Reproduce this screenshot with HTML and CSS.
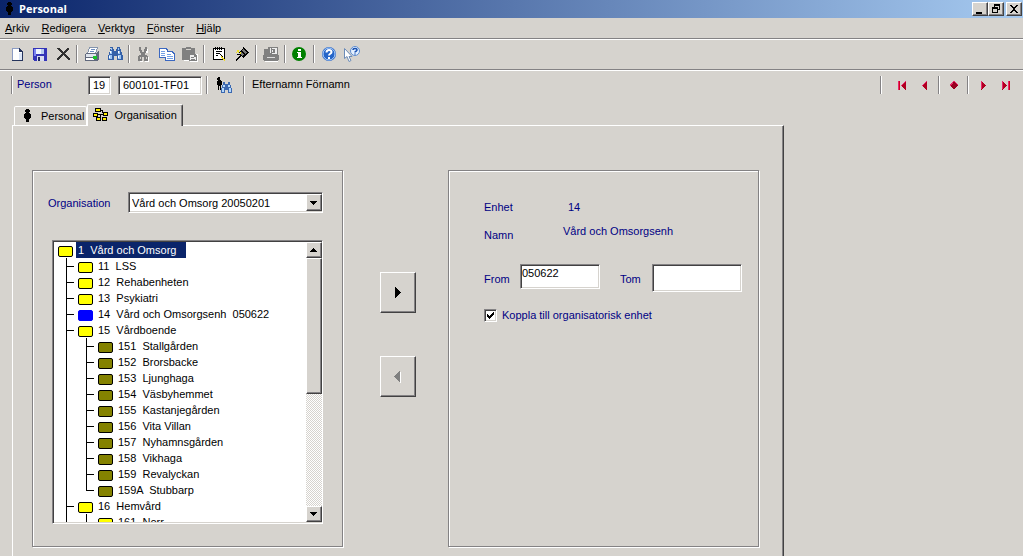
FILE: index.html
```html
<!DOCTYPE html>
<html lang="sv">
<head>
<meta charset="utf-8">
<title>Personal</title>
<link rel="stylesheet" href="styles.css">
</head>
<body>
<svg class="defs" aria-hidden="true">
  <symbol id="man" viewBox="0 0 16 16"><path d="M7 1h3v1h1v2h-1v1h1v1h1v4h-1v1h-1v3h-3v-3h-1v-1h-1v-4h1v-1h1v-1h-1v-2h1z"/></symbol>
  <symbol id="sm-binoc" viewBox="0 0 16 16"><path fill="#3460a8" d="M3 1h3v2h1v2h2v-2h1v-2h3v2h1v3h1v3h1v5h-6v-4h-3v4h-6v-5h1v-3h1v-3h1z"/><path fill="#9cc5f4" d="M4 2h1v2h-1zM3 5h2v3h-2zM11 2h1v2h-1zM11 5h2v3h-2zM2 9h3v4h-3zM11 9h3v4h-3z"/><path fill="#fff" d="M3 5h1v2h-1zM11 5h1v2h-1zM2 10h1v2h-1zM11 10h1v2h-1z"/></symbol>
  <symbol id="tri-l" viewBox="0 0 16 16"><path fill="#b00020" d="M9 4h1v9h-1v-1h-1v-1h-1v-1h-1v-1h-1v-1h1v-1h1v-1h1v-1h1z"/><path fill="#e8286c" d="M5 8h1v-1h1v-1h1v-1h1v-1h1v1h-1v1h-1v1h-1v1h-1v1h-1z"/></symbol>
  <symbol id="tri-r" viewBox="0 0 16 16"><path fill="#b00020" d="M6 4h1v1h1v1h1v1h1v1h1v1h-1v1h-1v1h-1v1h-1v1h-1z"/><path fill="#e8286c" d="M6 4h1v8h-1z"/></symbol>
</svg>

<header class="titlebar">
  <svg class="icon"><use href="#man"/></svg>
  <h1>Personal</h1>
  <div class="winbtns">
    <button aria-label="Minimera"><svg width="12" height="10"><path d="M2 8h6v2h-6z"/></svg></button>
    <button aria-label="Återställ"><svg width="12" height="10"><path fill-rule="evenodd" d="M4 0h6v6h-2v-1h1v-3h-4v1h-1zM2 3h6v6h-6zM3 5v3h4v-3z"/></svg></button>
    <button class="close" aria-label="Stäng"><svg width="12" height="10"><path d="M2 1h2v1h1v1h2v-1h1v-1h2v1h-1v1h-1v1h-1v2h1v1h1v1h1v1h-2v-1h-1v-1h-2v1h-1v1h-2v-1h1v-1h1v-1h1v-2h-1v-1h-1v-1h-1z"/></svg></button>
  </div>
</header>

<nav class="menubar">
  <button><u>A</u>rkiv</button><button><u>R</u>edigera</button><button><u>V</u>erktyg</button><button><u>F</u>önster</button><button><u>H</u>jälp</button>
</nav>

<div class="toolbar">
  <button aria-label="Ny"><svg class="icon"><path fill="#fff" d="M3 2h7l4 4v9h-11z"/><path fill="#8c9cc4" d="M3 2h7v1h-6v11h-1z"/><path fill="#26345c" d="M10 2h1v1h1v1h1v1h1v10h-11v-1h10v-8h-3z"/><path fill="#dce6f8" d="M10 7h3v7h-3z"/></svg></button>
  <button aria-label="Spara"><svg class="icon"><path fill="#3434b8" d="M1 2h14v13h-13l-1-1z"/><path fill="#7c84f0" d="M2 3h2v7h-2z"/><path fill="#eef4ff" d="M4 3h8v5h-8z"/><path fill="#b8ccf0" d="M9 3h3v5h-3z"/><path fill="#d8dcf0" d="M5 10h7v5h-7z"/><path fill="#202868" d="M6 11h2v4h-2z"/></svg></button>
  <button aria-label="Ta bort"><svg class="icon"><path fill="#303030" d="M2 2h2l4 4 5-4h1v1l-4 4 5 6v1h-2l-5-5-4 5h-2v-1l5-6-5-4z"/></svg></button>
  <span class="sep"></span>
  <button aria-label="Skriv ut"><svg class="icon"><path fill="#8494ac" d="M5 1h9v1l-2 6h-9z"/><path fill="#fff" d="M6 2h7l-2 5h-7z"/><path fill="#6c8cc0" d="M7 3h4v1h-4zM6 5h4v1h-4z"/><path fill="#60687c" d="M1 8l2-1h9l2-2h1v8l-2 2h-12z"/><path fill="#dfe5ed" d="M2 8h10v3h-10z"/><path fill="#fff" d="M2 12h8v2h-8z"/><path fill="#18c428" d="M9 10h4v3h-4z"/></svg></button>
  <button aria-label="Sök"><svg class="icon"><use href="#sm-binoc"/></svg></button>
  <span class="sep"></span>
  <button aria-label="Klipp ut"><svg class="icon"><path fill="#fff" d="M11 3h1v4h-2v3h2v1h1v5h-4v-1h3v-4h-3zM4 15h3v1h-3z"/><path fill="#808080" d="M3 1h2v3h1v2h2v-3h1v-2h2v4h-1v2h-1v2h2v1h1v5h-4v-4h-2v4h-4v-5h1v-1h2v-2h-1v-2h-1zM4 11v2h1v-2zM10 11v2h1v-2z" fill-rule="evenodd"/></svg></button>
  <button aria-label="Kopiera"><svg class="icon"><path fill="#3c68c0" d="M0 2h7l2 2v8h-9zM6 5h7l3 3v7h-10z"/><path fill="#fff" d="M1 3h5l2 2v6h-7zM7 6h5l3 3v5h-8z"/><path fill="#74a0e4" d="M2 5h4v1h-4zM2 7h4v1h-4zM2 9h4v1h-4zM8 8h4v1h-4zM8 10h6v1h-6zM8 12h6v1h-6z"/></svg></button>
  <button aria-label="Klistra in"><svg class="icon"><path fill="#fff" d="M2 14h6v1h-6zM14 8h2v8h-8v-1h7v-6h-1z"/><path fill="#808080" d="M0 2h4v-1h5v1h4v6h-6v6h-7z"/><path fill="#d6d3ce" d="M4 3h5v1h-5z"/><path fill="#808080" d="M7 8h6l2 2v5h-8z"/><path fill="#eee" d="M8 9h4v2h2v3h-6z"/><path fill="#808080" d="M9 11h3v1h-3zM9 13h4v1h-4z"/></svg></button>
  <span class="sep"></span>
  <button aria-label="Anteckning"><svg class="icon"><path d="M2 2h12v12h-12z"/><path fill="#fff" d="M3 3h10v10h-10z"/><path d="M4 1h1v3h-1zM6 1h1v3h-1zM8 1h1v3h-1zM10 1h1v3h-1zM5 5h6v1h-6zM5 7h3v1h-3zM5 9h2v1h-2zM8 7h1v1h1v1h1v1h1v1h-1v-1h-1v-1h-1v-1h-1z"/><path fill="#f0dc20" d="M10 10h1v1h1v1h1v1h1v2h-1v-1h-1v-1h-1v-1h-1z"/></svg></button>
  <button aria-label="Verktyg"><svg class="icon"><path d="M9 1h1v1h1v1h1v1h1v1h1v1h1v1h-1v1h-1v1h-1v1h-1v1h-1v1h-1v-1h-1v-1h-1v1h-1v1h-1v1h-1v1h-1v1h-1v-2h1v-1h1v-1h1v-1h1v-1h-3v-1h3v-1h-1v-1h1v-1h1v-1h1v-1h1z"/><path fill="#777" d="M9 3h1v1h1v1h1v1h1v1h-1v1h-1v-1h-1v-1h-1v-1h-1v-1h1zM7 6h1v1h1v1h1v1h-1v1h-1v-1h-1z"/><path fill="#f0e020" d="M3 4h2v3h-1v-1h-1zM2 6h1v1h-1zM6 6h1v2h-1z"/></svg></button>
  <span class="sep"></span>
  <button aria-label="Arkivera"><svg class="icon"><path fill="#fff" d="M2 15h13v1h-13z"/><path fill="#808080" d="M1 3h4v-2h10v8h1v5h-1v1h-14v-1h-1v-5h1z"/><path fill="#eee" d="M7 2h1v5h-1zM9 2h5v1h-5zM12 3h2v5h-2zM9 7h3v1h-3zM9 4h1v2h-1z"/><path fill="#ddd" d="M4 11h8v1h-8z"/></svg></button>
  <span class="sep"></span>
  <button aria-label="Information"><svg class="icon"><circle class="smooth" cx="7" cy="8" r="7" fill="#008000"/><path fill="#fff" d="M6 3h3v2h-3zM5 6h4v5h1v1h-5v-1h1v-4h-1z"/></svg></button>
  <span class="sep"></span>
  <button aria-label="Hjälp"><svg class="icon smooth"><circle cx="8" cy="8" r="7" fill="#2464c8"/><circle cx="8" cy="8" r="6" fill="none" stroke="#b4d4fc"/><path fill="none" stroke="#fff" stroke-width="2" d="M5.500 6.500C5.500 3 10.500 3.500 10.500 6c0 2-2.500 1.500-2.500 3.500M8 11v2"/></svg></button>
  <button aria-label="Förklaring"><svg class="icon smooth"><path fill="#fff" stroke="#6c8cb8" d="M.5 2.500v10l2.500-2 2 5 2-1-2-4h3z"/><circle cx="11" cy="5" r="4.500" fill="#e4f0ff" stroke="#5c8cd0"/><path fill="none" stroke="#1850b0" stroke-width="1.500" d="M9 4c0-2 4-2 4 0 0 1.500-2 1-2 2.500M11 7.500v1"/></svg></button>
</div>

<div class="personbar">
  <span class="sep"></span>
  <label class="blue" for="pid">Person</label>
  <input id="pid" class="sunk century" value="19">
  <input class="sunk number" aria-label="Personnummer" value="600101-TF01">
  <span class="sep"></span>
  <button class="find" aria-label="Sök person"><svg class="icon"><path d="M2 0h2v3h1v1h1v4h-1v5h-1v-4h-1v4h-1v-5h-1v-4h1v-1h-1v-2h1z"/><svg x="5" y="5" width="11" height="11" viewBox="0 0 11 11"><path fill="#3c68b0" d="M2 0h2v2h3v-2h2v3h1v3h1v5h-4v-3h-3v3h-4v-5h1v-3h1z"/><path fill="#b4d8fc" d="M2 3h2v2h-2zM7 3h2v2h-2zM1 6h2v4h-2zM8 6h2v4h-2z"/></svg></svg></button>
  <span class="sep"></span>
  <span class="name">Efternamn Förnamn</span>
  <div class="records">
    <span class="sep"></span>
    <button class="first" aria-label="Första"><svg class="icon"><path fill="#d00020" d="M4 4h2v9h-2z"/><path fill="#e8286c" d="M4 4h1v9h-1z"/><svg x="2" width="16" height="16"><use href="#tri-l"/></svg></svg></button>
    <button aria-label="Föregående"><svg class="icon"><use href="#tri-l"/></svg></button>
    <span class="sep"></span>
    <button aria-label="Aktuell"><svg class="icon"><path fill="#e8286c" d="M7 4h2v1h1v1h1v1h1v2h-1v1h-1v1h-1v1h-2v-1h-1v-1h-1v-1h-1v-2h1v-1h1v-1h1z"/><path fill="#980020" d="M7 5h2v1h1v1h1v1h1v1h-1v1h-1v1h-1v1h-2v-1h-1v-1h-1v-2h1v-1h1z"/></svg></button>
    <span class="sep"></span>
    <button aria-label="Nästa"><svg class="icon"><use href="#tri-r"/></svg></button>
    <button aria-label="Sista"><svg class="icon"><path fill="#d00020" d="M10 4h2v9h-2z"/><path fill="#e8286c" d="M10 4h1v9h-1z"/><svg x="-2" width="16" height="16"><use href="#tri-r"/></svg></svg></button>
  </div>
</div>

<div class="tabs" role="tablist">
  <button class="tab" role="tab"><svg class="icon"><use href="#man"/></svg>Personal</button>
  <button class="tab active" role="tab" aria-selected="true"><svg class="icon"><path d="M2 1h6v4h-6zM0 6h5v4h-5zM10 5h5v4h-5zM3 10h5v4h-5zM9 10h5v4h-5zM8 3h2v2h1v1h-2v-2h-1zM5 7h5v1h-5zM7 8h1v2h-1z"/><path fill="#ffee00" d="M3 2h4v2h-4zM1 7h3v2h-3zM11 6h3v2h-3zM4 11h3v2h-3zM10 11h3v2h-3z"/></svg>Organisation</button>
</div>

<main class="page">
  <section class="panel">
    <div class="picker">
      <label class="blue" for="org">Organisation</label>
      <div class="combo">
        <select id="org" class="sunk"><option>Vård och Omsorg 20050201</option></select>
        <span class="raised arrow"><svg width="8" height="4"><path d="M0 0h7v1h-1v1h-1v1h-1v1h-1v-1h-1v-1h-1v-1h-1z"/></svg></span>
      </div>
    </div>
    <div class="treebox sunk">
      <div class="tree">
        <div class="row root"><i class="box"></i><span class="txt sel">1  Vård och Omsorg</span></div>
        <ul>
          <li><div class="row"><i class="box"></i><span class="txt">11  LSS</span></div></li>
          <li><div class="row"><i class="box"></i><span class="txt">12  Rehabenheten</span></div></li>
          <li><div class="row"><i class="box"></i><span class="txt">13  Psykiatri</span></div></li>
          <li><div class="row"><i class="box current"></i><span class="txt">14  Vård och Omsorgsenh  050622</span></div></li>
          <li><div class="row"><i class="box"></i><span class="txt">15  Vårdboende</span></div>
            <ul>
              <li><div class="row"><i class="box leaf"></i><span class="txt">151  Stallgården</span></div></li>
              <li><div class="row"><i class="box leaf"></i><span class="txt">152  Brorsbacke</span></div></li>
              <li><div class="row"><i class="box leaf"></i><span class="txt">153  Ljunghaga</span></div></li>
              <li><div class="row"><i class="box leaf"></i><span class="txt">154  Väsbyhemmet</span></div></li>
              <li><div class="row"><i class="box leaf"></i><span class="txt">155  Kastanjegården</span></div></li>
              <li><div class="row"><i class="box leaf"></i><span class="txt">156  Vita Villan</span></div></li>
              <li><div class="row"><i class="box leaf"></i><span class="txt">157  Nyhamnsgården</span></div></li>
              <li><div class="row"><i class="box leaf"></i><span class="txt">158  Vikhaga</span></div></li>
              <li><div class="row"><i class="box leaf"></i><span class="txt">159  Revalyckan</span></div></li>
              <li class="last"><div class="row"><i class="box leaf"></i><span class="txt">159A  Stubbarp</span></div></li>
            </ul>
          </li>
          <li><div class="row"><i class="box"></i><span class="txt">16  Hemvård</span></div>
            <ul>
              <li><div class="row"><i class="box"></i><span class="txt">161  Norr</span></div></li>
            </ul>
          </li>
        </ul>
      </div>
      <div class="scroll">
        <button class="raised" aria-label="Upp"><svg width="8" height="4"><path d="M3 0h1v1h1v1h1v1h1v1h-7v-1h1v-1h1v-1h1z"/></svg></button>
        <div class="raised thumb"></div>
        <div class="track"></div>
        <button class="raised" aria-label="Ned"><svg width="8" height="4"><path d="M0 0h7v1h-1v1h-1v1h-1v1h-1v-1h-1v-1h-1v-1h-1z"/></svg></button>
      </div>
    </div>
  </section>

  <div class="movers">
    <button class="raised" aria-label="Koppla"><svg width="8" height="12"><path d="M1 0h1v1h1v1h1v1h1v1h1v1h1v1h-1v1h-1v1h-1v1h-1v1h-1v1h-1z"/></svg></button>
    <button class="raised" aria-label="Ta bort koppling" disabled><svg width="8" height="12"><path fill="#fff" d="M6 1h1v11h-1z"/><path fill="#808080" d="M5 0h1v11h-1v-1h-1v-1h-1v-1h-1v-1h-1v-1h-1v-1h1v-1h1v-1h1v-1h1v-1h1z"/></svg></button>
  </div>

  <section class="panel details blue">
    <dl>
      <dt>Enhet</dt><dd class="unit">14</dd>
      <dt>Namn</dt><dd class="unitname">Vård och Omsorgsenh</dd>
    </dl>
    <div class="dates">
      <label for="from">From</label>
      <input id="from" class="sunk from" value="050622">
      <label for="tom" class="tomlabel">Tom</label>
      <input id="tom" class="sunk tom">
    </div>
    <label class="check"><input type="checkbox" class="sunk" checked><span>Koppla till organisatorisk enhet</span></label>
  </section>
</main>
</body>
</html>
```

FILE: styles.css
```css
* { box-sizing: border-box; }

body {
  margin: 0;
  height: 100vh;
  overflow: hidden;
  background: #d6d3ce;
  color: #000;
  font: 11px/16px "Liberation Sans", Arial, sans-serif;
}

button, input, select {
  margin: 0;
  padding: 0;
  border: 0;
  background: none;
  border-radius: 0;
  color: inherit;
  font: inherit;
}

svg { display: block; shape-rendering: crispEdges; }
.defs { display: none; }
.icon { width: 16px; height: 16px; flex: none; }
.smooth { shape-rendering: auto; }
.blue { color: #000084; }

.sunk {
  background: #fff;
  color: #000;
  border: 1px solid;
  border-color: #848284 #fff #fff #848284;
  box-shadow: inset 1px 1px #424142, inset -1px -1px #d6d3ce;
}

.raised {
  background: #d6d3ce;
  border: 1px solid;
  border-color: #fff #424142 #424142 #fff;
  box-shadow: inset -1px -1px #848284;
  display: flex;
  align-items: center;
  justify-content: center;
}

.titlebar {
  display: flex;
  align-items: center;
  height: 18px;
  padding: 0 1px;
  background: linear-gradient(90deg, #0a246a, #a6caf0);
  color: #fff;
}
.titlebar .icon { color: #000; }
.titlebar h1 { margin: 0 auto 0 2px; font: bold 11px/16px "Open Sans", sans-serif; }

.winbtns { display: flex; }
.winbtns button {
  width: 16px;
  height: 14px;
  padding: 1px;
  background: #d6d3ce;
  border: 1px solid;
  border-color: #fff #424142 #424142 #fff;
  box-shadow: inset -1px -1px #848284;
}
.winbtns .close { margin-left: 2px; }

.menubar {
  display: flex;
  gap: 12px;
  height: 22px;
  padding: 2px 5px 0;
  border-bottom: 1px solid #fff;
  box-shadow: inset 0 -1px #848284;
}
.menubar button { height: 16px; }

.toolbar {
  display: flex;
  align-items: center;
  height: 31px;
  padding: 0 5px 2px;
  border-bottom: 1px solid #fff;
  box-shadow: inset 0 -1px #848284;
}
.toolbar button, .records button {
  display: flex;
  align-items: center;
  justify-content: center;
  width: 23px;
  height: 22px;
}

.sep {
  flex: none;
  width: 2px;
  height: 18px;
  margin: 0 2px;
  border-left: 1px solid #848284;
  border-right: 1px solid #fff;
}

.personbar {
  display: flex;
  align-items: center;
  height: 28px;
  padding: 0 6px 0 9px;
}
.personbar label { width: 73px; padding: 0 0 2px 2px; }
.personbar .sunk { height: 19px; padding: 0 4px; }
.century { width: 23px; margin-right: 7px; }
.number { width: 84px; margin-right: 2px; }
.find { margin: 0 9px 0 6px; }
.name { padding: 0 0 2px 5px; }
.records { display: flex; align-items: center; margin-left: auto; }
.first { margin-left: 6px; }

.tabs {
  display: flex;
  align-items: flex-end;
  height: 26px;
  padding: 0 14px;
}
.tab {
  display: flex;
  align-items: center;
  height: 19px;
  padding: 0 2px 0 4px;
  gap: 6px;
  border: 1px solid #fff;
  border-bottom: 0;
  border-radius: 2px 2px 0 0;
}
.tab.active {
  position: relative;
  height: 22px;
  margin-bottom: -1px;
  padding: 0 5px 2px;
  gap: 5px;
  background: #d6d3ce;
  border-right: 1px solid #424142;
  box-shadow: inset -1px 0 #848284;
}

.page {
  display: grid;
  grid-template-columns: 311px 1fr 311px;
  align-items: start;
  max-width: 772px;
  margin-left: 12px;
  padding: 44px 24px 40px 19px;
  border: 1px solid;
  border-color: #fff #424142 #424142 #fff;
  box-shadow: inset -1px 0 #848284;
}

.panel {
  align-self: stretch;
  padding: 21px 19px 22px;
  border: 1px solid #848284;
  box-shadow: inset 1px 1px #fff, 1px 1px #fff;
}

.picker { display: flex; align-items: center; margin: 0 0 27px -4px; }
.picker label { flex: 1; }
.combo { position: relative; width: 195px; }
.combo select {
  display: block;
  width: 100%;
  height: 21px;
  padding: 0 18px 0 3px;
  appearance: none;
}
.combo .arrow {
  position: absolute;
  top: 2px;
  right: 1px;
  width: 16px;
  height: 17px;
  pointer-events: none;
}

.treebox { display: flex; height: 284px; padding: 1px 0 1px 1px; }
.tree { flex: 1; overflow: hidden; }
.tree ul { margin: 0 0 0 12px; padding: 0; list-style: none; }
.tree ul ul { margin-left: 20px; }
.tree li { background: linear-gradient(#000, #000) 0 0 / 1px 100% no-repeat; }
.tree li.last { background-size: 1px 9px; }
.row { display: flex; align-items: center; height: 16px; }
.row.root { padding-left: 4px; }
.tree li > .row::before {
  content: "";
  width: 8px;
  height: 1px;
  margin-right: 4px;
  background: #000;
}
.box {
  width: 15px;
  height: 11px;
  margin: 2px 3px 0 0;
  border: 1px solid #000;
  border-radius: 2px;
  background: #ff0;
}
.box.leaf { background: #848200; }
.box.current { background: #00f; border-color: #00f; }
.txt { padding: 0 2px; white-space: pre; }
.txt.sel { padding-right: 10px; background: #0a246a; color: #fff; }

.scroll { display: flex; flex-direction: column; width: 16px; }
.scroll button { height: 16px; }
.thumb { height: 136px; }
.track { flex: 1; background: repeating-conic-gradient(#fff 0 25%, #d6d3ce 0 50%) 0 0 / 2px 2px; }

.movers {
  display: flex;
  flex-direction: column;
  align-items: center;
  gap: 43px;
  padding: 102px 0 0 5px;
}
.movers button { width: 36px; height: 41px; }

.details { padding: 28px 16px 20px 35px; }
.details dl {
  display: grid;
  grid-template-columns: 79px 1fr;
  row-gap: 12px;
  margin: 0 0 21px;
}
.details dd { margin: 0; }
.details .unit { padding-left: 5px; }
.details .unitname { margin-top: -4px; }
.dates { display: flex; align-items: flex-start; }
.dates label { width: 36px; padding-top: 7px; }
.dates .from { width: 80px; height: 25px; padding: 0 1px 7px; }
.dates .tomlabel { width: 32px; margin-left: 20px; }
.dates .tom { width: 90px; height: 28px; padding: 0 3px; }

.check { display: flex; align-items: center; gap: 5px; margin-top: 15px; }
.check input {
  appearance: none;
  width: 13px;
  height: 13px;
  background: #fff url("data:image/svg+xml,%3Csvg xmlns='http://www.w3.org/2000/svg' width='11' height='11' shape-rendering='crispEdges'%3E%3Cpath d='M2 4h1v1h1v1h1v-1h1v-1h1v-1h1v-1h1v3h-1v1h-1v1h-1v1h-1v1h-1v-1h-1v-1h-1z'/%3E%3C/svg%3E") no-repeat;
}
```
